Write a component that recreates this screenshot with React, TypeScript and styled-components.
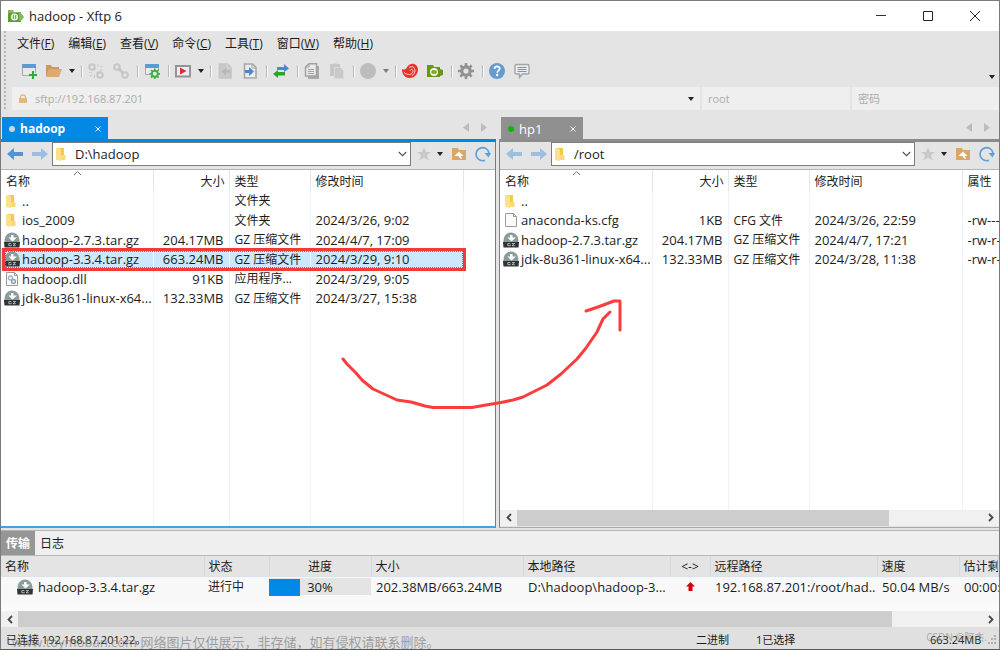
import React from "react";
import styled, { createGlobalStyle, css } from "styled-components";

const GlobalStyle = createGlobalStyle`
  * { box-sizing: border-box; }
  body {
    margin: 0;
    background: #e4e4e4;
    color: #1c1c1c;
    font: 13px/18px "Open Sans", "Noto Sans CJK SC", sans-serif;
  }
  button, input { font: inherit; color: inherit; }
  button { padding: 0; border: 0; background: none; white-space: nowrap; }
  svg { display: block; flex: none; }
`;

/* ---------- frame ---------- */

const Window = styled.div`
  position: relative;
  display: flex;
  flex-direction: column;
  min-height: 100vh;
  overflow: hidden;
  border: 1px solid #7c7a7c;
  border-bottom-color: #5a5a5a;
`;

const TitleBar = styled.header`
  display: flex;
  align-items: center;
  height: 30px;
  padding: 0 3px 0 7px;
  gap: 5px;
  background: #fff;
`;

const Title = styled.h1`
  flex: 1;
  margin: 0;
  font-size: 13px;
  font-weight: 400;
`;

const CaptionButton = styled.button`
  display: grid;
  place-items: center;
  width: 42px;
  height: 30px;
`;

/* ---------- menus and toolbar ---------- */

const Ribbon = styled.div`
  display: flex;
  flex-direction: column;
  padding-left: 11px;
  background: radial-gradient(circle at 1px 1px, #b4b4b4 1px, transparent 1px) 3px 0 / 2px 4px repeat-y, #e4e4e4;
`;

const MenuBar = styled.nav`
  display: flex;
  align-items: center;
  height: 25px;
  padding-left: 5px;
  gap: 14px;
`;

const MenuItem = styled.button`
  font-size: 12px;
`;

const ToolBar = styled.div`
  display: flex;
  align-items: center;
  height: 31px;
  padding: 0 0 2px 4px;
`;

const ToolButton = styled.button<{ $w?: number }>`
  display: grid;
  place-items: center;
  flex: none;
  width: ${(p) => p.$w ?? 25}px;
  height: 24px;
`;

const Separator = styled.span`
  flex: none;
  width: 6px;
  height: 12px;
  border-right: 1px solid #fafafa;
  background: linear-gradient(#b8b8b8, #b8b8b8) 4px 0 / 1px 100% no-repeat;
`;

const Overflow = styled.div`
  flex: 1;
  display: flex;
  justify-content: flex-end;
  padding: 12px 4px 0 0;
`;

const QuickConnect = styled.form`
  display: flex;
  gap: 2px;
  height: 23px;
`;

const Field = styled.div<{ $basis?: number }>`
  display: flex;
  align-items: center;
  flex: ${(p) => (p.$basis ? `0 1 ${p.$basis}px` : "1 1 0")};
  min-width: 0;
  padding: 1px 6px 0;
  background: #efefef;
  color: #ababab;
  font-size: 11px;
`;

const TextInput = styled.input`
  flex: 1;
  min-width: 0;
  padding: 0;
  border: 0;
  outline: 0;
  background: none;
  &::placeholder { color: #ababab; opacity: 1; }
`;

const FieldInput = styled(TextInput)<{ $lead?: boolean }>`
  margin-left: ${(p) => (p.$lead ? 7 : 0)}px;
`;

/* ---------- panes ---------- */

const Panes = styled.main`
  flex: 1;
  display: grid;
  grid-template-columns: 495fr 500fr;
  gap: 3px;
`;

const Pane = styled.section`
  display: flex;
  flex-direction: column;
  min-width: 0;
`;

const TabStrip = styled.div<{ $active: boolean }>`
  display: flex;
  align-items: flex-end;
  height: 32px;
  padding-left: ${(p) => (p.$active ? 1 : 2)}px;
  border-bottom: 3px solid ${(p) => (p.$active ? "#0088dd" : "#8c8c8c")};
`;

const Tab = styled.div<{ $active: boolean }>`
  display: flex;
  align-items: center;
  width: ${(p) => (p.$active ? 106 : 82)}px;
  height: 22px;
  padding: 2px 7px 0;
  gap: 5px;
  background: ${(p) => (p.$active ? "#0289e6" : "#909090")};
  color: #fff;
  font-size: ${(p) => (p.$active ? 12 : 13)}px;
  font-weight: ${(p) => (p.$active ? 700 : 400)};
`;

const TabLabel = styled.button`
  flex: 1;
  text-align: left;
`;

const Dot = styled.i<{ $color: string }>`
  width: 6px;
  height: 6px;
  border-radius: 50%;
  background: ${(p) => p.$color};
`;

const TabScroll = styled.div`
  flex: 1;
  display: flex;
  justify-content: flex-end;
  gap: 12px;
  padding: 0 9px 7px 0;
`;

const PaneBody = styled.div<{ $active: boolean }>`
  flex: 1;
  display: flex;
  flex-direction: column;
  min-width: 0;
  ${(p) =>
    p.$active
      ? css`border-right: 1px solid #3a8fc0; border-bottom: 2px solid #45a3dc;`
      : css`padding-bottom: 1px; border-left: 1px solid #808080; border-bottom: 1px solid #a8a8a8;`}
`;

const PathBar = styled.div`
  display: flex;
  align-items: center;
  height: 28px;
  padding: 0 0 3px 1px;
  border-bottom: 1px solid #b4b4b4;
`;

const PathBox = styled.div`
  display: flex;
  align-items: center;
  flex: 1;
  min-width: 0;
  height: 24px;
  margin-right: 1px;
  padding: 0 3px 0 1px;
  gap: 5px;
  border: 1px solid #7c7c7c;
  background: #fff;
`;

const PathGap = styled.span`
  width: 3px;
`;

const FileArea = styled.div`
  flex: 1;
  display: grid;
  overflow: hidden;
  background: #fff;
`;

const FileTable = styled.table`
  width: 100%;
  height: 100%;
  table-layout: fixed;
  border-collapse: collapse;
`;

const HeadRow = styled.tr`
  height: 21px;
`;

const HeadCell = styled.th<{ $right?: boolean; $last?: boolean }>`
  position: relative;
  padding: ${(p) => (p.$right ? "2px 4px 0 0" : "2px 0 0 5px")};
  border-right: ${(p) => (p.$last ? 0 : 1)}px solid #e2e6ea;
  overflow: hidden;
  font-size: 12px;
  font-weight: 400;
  text-align: ${(p) => (p.$right ? "right" : "left")};
  white-space: nowrap;
`;

const SortMark = styled.span`
  position: absolute;
  top: 0;
  left: 50%;
  margin-left: -4px;
`;

const FileRow = styled.tr<{ $selected?: boolean }>`
  height: 19px;
  &:nth-child(even) { height: 20px; }
  ${(p) => p.$selected && css`td:not(:last-child) { background: #cce8ff; }`}
`;

const FillRow = styled.tr``;

const FileCell = styled.td<{ $right?: boolean; $cjk?: boolean; $last?: boolean }>`
  padding: ${(p) => (p.$right ? "0 5px 0 0" : p.$cjk ? "1px 0 0 5px" : "0 0 0 5px")};
  border-right: ${(p) => (p.$last ? 0 : 1)}px solid #edf3fa;
  overflow: hidden;
  font-size: ${(p) => (p.$cjk ? 12 : 13)}px;
  text-align: ${(p) => (p.$right ? "right" : "left")};
  white-space: nowrap;
`;

const NameCell = styled(FileCell)`
  padding: 0 0 0 3px;
`;

const NameLine = styled.span<{ $gap?: number }>`
  display: flex;
  align-items: center;
  gap: ${(p) => p.$gap ?? 2}px;
`;

const ScrollBar = styled.div`
  display: flex;
  height: 16px;
  background: #f0f0f0;
`;

const ScrollButton = styled.button`
  display: grid;
  place-items: center;
  width: 17px;
  height: 16px;
`;

const ScrollTrack = styled.div`
  flex: 1;
`;

const ScrollThumb = styled.div`
  height: 16px;
  background: #cdcdcd;
`;

/* ---------- transfer panel ---------- */

const Transfers = styled.section`
  margin-top: 2px;
  border-top: 1px solid #b4b4b4;
  background: #f8f8f8;
`;

const PanelTabs = styled.div`
  display: flex;
  height: 25px;
  border-bottom: 1px solid #b8b8b8;
  background: #efefef;
`;

const PanelTab = styled.button<{ $on?: boolean }>`
  padding: 2px 5px 0;
  background: ${(p) => (p.$on ? "#969696" : "transparent")};
  color: ${(p) => (p.$on ? "#fff" : "inherit")};
  font-size: 12px;
  font-weight: ${(p) => (p.$on ? 700 : 400)};
`;

const TransferTable = styled.table`
  width: 100%;
  table-layout: fixed;
  border-collapse: collapse;
`;

const TransferHead = styled.th<{ $center?: boolean }>`
  height: 20px;
  padding: 2px 0 0 ${(p) => (p.$center ? 0 : 4)}px;
  border-right: 1px solid #d0dae4;
  border-bottom: 1px solid #dbe2e9;
  overflow: hidden;
  background: #e4e4e4;
  font-size: 12px;
  font-weight: 400;
  text-align: ${(p) => (p.$center ? "center" : "left")};
  white-space: nowrap;
`;

const TransferCell = styled.td<{ $flush?: boolean; $cjk?: boolean }>`
  height: 21px;
  padding: ${(p) => (p.$cjk ? 1 : 0)}px 0 0 ${(p) => (p.$flush ? 0 : p.$cjk ? 4 : 5)}px;
  overflow: hidden;
  font-size: ${(p) => (p.$cjk ? 12 : 13)}px;
  white-space: nowrap;
`;

const Progress = styled.div`
  display: grid;
  align-items: center;
  height: 17px;
  background: #e4e4e4;
  text-align: center;
  > * { grid-area: 1 / 1; }
`;

const ProgressFill = styled.div`
  height: 17px;
  background: #0289e6;
`;

const Centered = styled.div`
  display: grid;
  justify-items: center;
`;

const TransferGap = styled.div`
  height: 14px;
  background: linear-gradient(#f8f8f8, #fbfbfb);
`;

const StatusBar = styled.footer`
  display: flex;
  align-items: center;
  height: 22px;
  padding: 3px 2px 0 5px;
  background: #e0e0e0;
  font-size: 11px;
`;

const Status = styled.span<{ $w?: number }>`
  ${(p) => (p.$w ? `width: ${p.$w}px;` : "flex: 1;")}
  white-space: nowrap;
`;

const Watermark = styled.div`
  position: absolute;
  left: 11px;
  bottom: -2px;
  color: rgba(110, 110, 110, 0.6);
  white-space: nowrap;
`;

const CornerMark = styled.div`
  position: absolute;
  right: 12px;
  bottom: 3px;
  color: rgba(110, 110, 110, 0.5);
  font-size: 10px;
  white-space: nowrap;
`;

/* ---------- annotations drawn over the window ---------- */

const Highlight = styled.div`
  position: absolute;
  top: 247px;
  left: 1px;
  width: 464px;
  height: 23px;
  border: 3px solid #f23a3a;
  outline: 1px dotted #777;
  outline-offset: -4px;
  pointer-events: none;
`;

const Stroke = styled.svg`
  position: absolute;
  top: 289px;
  left: 334px;
  pointer-events: none;
`;

/* ---------- icons ---------- */

const Svg = ({ children, w = 16, h = 16 }: { children: React.ReactNode; w?: number; h?: number }) => (
  <svg width={w} height={h} viewBox={`0 0 ${w} ${h}`} fill="none" aria-hidden="true">{children}</svg>
);

const AppIcon = () => (
  <Svg>
    <path d="M0 2h5l1 2h7v10H0z" fill="#8ab45a" />
    <path d="M0 5h13v9H0z" fill="#5f9a38" />
    <path d="M11 5h2l3 4-3 4h-2z" fill="#86b956" />
    <circle cx="6.500" cy="9" r="3.600" fill="#e9f3dc" />
    <path d="M5.300 10.800V8q0-.8.800-.800M7.700 7.200v2.800q0 .8-.8.800" stroke="#5f9a38" />
  </Svg>
);
const NewSession = () => (
  <Svg>
    <path d="M1.500 1.500h13v11h-13z" fill="#e9e9e9" stroke="#a9a9a9" />
    <path d="M1 1h14v4H1z" fill="#5b9bd5" />
    <path d="M12 8v8M8 12h8" stroke="#e4e4e4" strokeWidth="4" />
    <path d="M12 8v8M8 12h8" stroke="#27b033" strokeWidth="2" />
  </Svg>
);
const OpenFolder = () => (
  <Svg>
    <path d="M0 2h5l1 2h7v3H3L0 14z" fill="#c79a62" />
    <path d="M3 6h13l-3 8H0z" fill="#dcaa6c" />
  </Svg>
);
const LinkIcon = ({ broken }: { broken?: boolean }) => (
  <Svg>
    <circle cx="4" cy="4" r="2.800" stroke="#c6c6c6" strokeWidth="2" />
    <circle cx="12" cy="12" r="2.800" stroke="#c6c6c6" strokeWidth="2" />
    {broken ? (
      <>
        <path d="M5.500 5.500l1.500 1.500M9 9l1.500 1.500" stroke="#c6c6c6" strokeWidth="2" />
        <path d="M10 1v3M12 4.500l2.500-1.500M11 7h4M1 9.500h3M2 13.500l2-2M6.500 11.500V15" stroke="#cecece" strokeWidth="1.200" />
      </>
    ) : (
      <path d="M6 6l4 4" stroke="#c6c6c6" strokeWidth="2.600" />
    )}
  </Svg>
);
const gearTeeth = "M8 0v16M0 8h16M2.300 2.300l11.400 11.400M13.700 2.300L2.300 13.700";
const SessionGear = () => (
  <Svg>
    <path d="M1.500 1.500h13v10h-13z" fill="#e9e9e9" stroke="#a9a9a9" />
    <path d="M1 1h14v4H1z" fill="#5b9bd5" />
    <g transform="translate(5.500 5.500) scale(.66)">
      <circle cx="8" cy="8" r="7.500" fill="#e4e4e4" />
      <path d={gearTeeth} stroke="#3fae49" strokeWidth="2.600" />
      <circle cx="8" cy="8" r="4.500" fill="#e9e9e9" stroke="#3fae49" strokeWidth="2.800" />
    </g>
  </Svg>
);
const PlayBox = () => (
  <Svg>
    <path d="M1 3h14v10.500H1z" fill="#e8eef2" stroke="#949494" strokeWidth="2" />
    <path d="M5 4.500v7l6.500-3.500z" fill="#e02a35" />
  </Svg>
);
const DocArrow = ({ on }: { on?: boolean }) => (
  <Svg>
    <path d="M2.500 1h8l3.500 3.500V15H2.500z" fill={on ? "#ececec" : "#c9c9c9"} stroke={on ? "#a6a6a6" : "#c4c4c4"} strokeWidth="1.600" />
    <path d="M10 1v4h4" stroke={on ? "#a6a6a6" : "#d8d8d8"} />
    {on ? <path d="M3 7h4V4l5 4.500-5 4.500v-3H3z" fill="#4788d0" /> : <path d="M13 7.500H9v-3L4.500 8.500 9 12.500v-3h4z" fill="#b5b5b5" />}
  </Svg>
);
const Swap = () => (
  <Svg>
    <path d="M4 4h7V1l5 4.500L11 9V7H4z" fill="#4d87cf" />
    <path d="M12 9H5V7l-5 4 5 4v-2.500h7z" fill="#27a52d" />
  </Svg>
);
const CopyIcon = () => (
  <Svg>
    <path d="M4 3h11v13H4z" fill="#a9a9a9" />
    <path d="M1.500 4L5 .8h7.500V13h-11z" fill="#e9e9e9" stroke="#a0a0a0" strokeWidth="1.400" />
    <path d="M4 6.500h6M4 8.500h6M4 10.500h6M5 1v3H2" stroke="#a0a0a0" />
  </Svg>
);
const PasteIcon = () => (
  <Svg>
    <path d="M1 1h10v12H1z" fill="#c7c7c7" />
    <path d="M5.500 4.500h6l3 3v8h-9z" fill="#c9c9c9" stroke="#dadada" />
    <path d="M4 .5h4" stroke="#d8d8d8" />
  </Svg>
);
const Disc = () => <Svg><circle cx="8" cy="8" r="8" fill="#bdbdbd" /></Svg>;
const XshellIcon = () => (
  <Svg>
    <path d="M0 6c2 1 3.500.5 4.500-1C6 2 9 0 12 1c4 1 5 6 3 9.500C12.500 15.500 6 16.500 2.500 13 .5 11 0 9 0 6z" fill="#e8342f" />
    <path d="M2 9.500c3.500 3 8.500 2.500 9-1 .2-2.200-2.300-2.800-2.800-1M7 4.500c3-2 6 0 6 3 0 2.500-1.500 4-3 5" stroke="#f7d4d0" strokeWidth="1" />
  </Svg>
);
const XftpIcon = () => (
  <Svg>
    <path d="M0 2h6l1 2h6v2l3 1v5l-3 1v1H0z" fill="#69980c" />
    <circle cx="7" cy="9" r="4" fill="#f1f6e8" />
    <path d="M5 10.500V8.500q0-1 1.200-1V11M9 7.500v2q0 1-1.200 1V7" stroke="#69980c" strokeWidth="1.100" />
  </Svg>
);
const Gear = () => (
  <Svg>
    <path d={gearTeeth} stroke="#919191" strokeWidth="2.600" />
    <circle cx="8" cy="8" r="4.200" fill="#e4e4e4" stroke="#919191" strokeWidth="3.200" />
  </Svg>
);
const Help = () => (
  <Svg>
    <circle cx="8" cy="8" r="8" fill="#659bd3" />
    <path d="M5.500 6c0-3.400 5.200-3.200 5.200-.400 0 2-2.500 2-2.500 4.200" stroke="#fff" strokeWidth="1.800" />
    <circle cx="8.200" cy="12" r="1.200" fill="#fff" />
  </Svg>
);
const Comment = () => (
  <Svg>
    <path d="M2.500 1.500h11q1.500 0 1.500 1.500v6.500q0 1.500-1.500 1.500H8.500L5.500 14.500V11h-3Q1 11 1 9.500V3q0-1.500 1.500-1.500z" fill="#e9edf0" stroke="#a5a5a5" strokeWidth="1.400" />
    <path d="M3.500 4.500h9M3.500 6.500h9M3.500 8.500h9" stroke="#5e9ad4" />
  </Svg>
);
const Caret = ({ color = "#222" }: { color?: string }) => (
  <Svg w={6} h={4}><path d="M0 0h6L3 4z" fill={color} /></Svg>
);
const Lock = () => (
  <Svg w={10} h={10}>
    <path d="M2.500 5V3q0-2 2.500-2t2.500 2v2" stroke="#e5b878" strokeWidth="1.300" />
    <path d="M1 4h8v5H1z" fill="#e5b878" />
  </Svg>
);
const NavArrow = ({ back, strong }: { back?: boolean; strong?: boolean }) => (
  <Svg>
    <path d={back ? "M0 8l7-6v4h9v4H7v4z" : "M16 8L9 2v4H0v4h9v4z"} fill={strong ? "#4f95d4" : "#9dbfde"} />
  </Svg>
);
const Folder = () => (
  <Svg>
    <path d="M4 2h6v12H4z" fill="#f2c94f" />
    <path d="M2 2l5 1v12l-5-1z" fill="#fde08a" />
    <path d="M7 9h4.500v5H7z" fill="#fad976" />
  </Svg>
);
const Archive = () => (
  <Svg>
    <path d="M.5 9.500C.5 4 3.500 .5 8 .5s7.500 3.500 7.500 9V11H.5z" fill="#8b9b9a" />
    <path d="M7 3h2.500v2.500H13L8.500 9.500 4.500 5.500H7z" fill="#fff" />
    <path d="M0 10h16l-.5 5.500H.5z" fill="#2f3335" />
    <path d="M7.300 11.500H4.800v2.200h2.500v-1M9 11.500h2.600L9 13.700h2.800" stroke="#d8dcdc" strokeWidth=".7" />
  </Svg>
);
const Sheet = ({ gears }: { gears?: boolean }) => (
  <Svg>
    <path d="M2.500 1.500h8l3 3v10h-11z" fill="#fafafa" stroke="#9a9a9a" />
    <path d="M10.500 1.500v3h3" stroke="#9a9a9a" />
    {gears && (
      <>
        <circle cx="6.500" cy="7" r="2" stroke="#9fb3c0" strokeWidth="1.400" />
        <circle cx="9.500" cy="10.500" r="2" fill="#dbe7ee" stroke="#8ba3b2" strokeWidth="1.400" />
      </>
    )}
  </Svg>
);
const Star = () => (
  <Svg w={14} h={14}><path d="M7 0l2 5h5l-4 3.300 1.500 5.200L7 10.500l-4.500 3L4 8.300 0 5h5z" fill="#c9c9c9" /></Svg>
);
const UpFolder = () => (
  <Svg>
    <path d="M1 2h6l1 2h7v10H1z" fill="#dba766" />
    <path d="M8 5.500l4.500 4.500H10c0 1 .5 2 1.500 3-2-.2-3.500-1-4-3H3.500z" fill="#fff" />
  </Svg>
);
const Refresh = () => (
  <Svg>
    <path d="M10 14.200A6.500 6.500 0 1 1 14 7" stroke="#5c9fda" strokeWidth="1.600" />
    <path d="M9.500 7H16l-2.500 4.500z" fill="#5c9fda" />
  </Svg>
);
const Chevron = () => <Svg w={9} h={6}><path d="M.8 1l3.700 3.700L8.200 1" stroke="#555" strokeWidth="1.200" /></Svg>;
const SortUp = () => <Svg w={9} h={6}><path d="M1 5l3.500-3.500L8 5" stroke="#777" /></Svg>;
const Cross = () => <Svg w={6} h={6}><path d="M.5.500l5 5M5.500.500l-5 5" stroke="#f2f2f2" /></Svg>;
const SideTri = ({ left }: { left?: boolean }) => (
  <Svg w={6} h={9}><path d={left ? "M6 0v9L0 4.500z" : "M0 0v9l6-4.500z"} fill="#bcbcbc" /></Svg>
);
const ScrollArrow = ({ left }: { left?: boolean }) => (
  <Svg w={6} h={9}><path d={left ? "M5 1L1.500 4.500 5 8" : "M1 1l3.500 3.500L1 8"} stroke="#484848" strokeWidth="1.800" /></Svg>
);
const UpArrow = () => <Svg w={9} h={9}><path d="M4.500 0L9 4.500H6.500V9h-4V4.500H0z" fill="#d0000c" /></Svg>;
const Grip = () => (
  <Svg w={10} h={10}><path d="M7 1h2M4 4h2M7 4h2M1 8h2M4 8h2M7 8h2" stroke="#b0b0b0" strokeWidth="2" /></Svg>
);

/* ---------- data ---------- */

type Kind = "folder" | "gz" | "dll" | "file";
type Entry = { kind: Kind; name: string; size?: string; type?: string; time?: string; attr?: string; selected?: boolean };

const localFiles: Entry[] = [
  { kind: "folder", name: "..", type: "文件夹" },
  { kind: "folder", name: "ios_2009", type: "文件夹", time: "2024/3/26, 9:02" },
  { kind: "gz", name: "hadoop-2.7.3.tar.gz", size: "204.17MB", type: "GZ 压缩文件", time: "2024/4/7, 17:09" },
  { kind: "gz", name: "hadoop-3.3.4.tar.gz", size: "663.24MB", type: "GZ 压缩文件", time: "2024/3/29, 9:10", selected: true },
  { kind: "dll", name: "hadoop.dll", size: "91KB", type: "应用程序...", time: "2024/3/29, 9:05" },
  { kind: "gz", name: "jdk-8u361-linux-x64...", size: "132.33MB", type: "GZ 压缩文件", time: "2024/3/27, 15:38" },
];

const remoteFiles: Entry[] = [
  { kind: "folder", name: ".." },
  { kind: "file", name: "anaconda-ks.cfg", size: "1KB", type: "CFG 文件", time: "2024/3/26, 22:59", attr: "-rw-------" },
  { kind: "gz", name: "hadoop-2.7.3.tar.gz", size: "204.17MB", type: "GZ 压缩文件", time: "2024/4/7, 17:21", attr: "-rw-r--r--" },
  { kind: "gz", name: "jdk-8u361-linux-x64...", size: "132.33MB", type: "GZ 压缩文件", time: "2024/3/28, 11:38", attr: "-rw-r--r--" },
];

const menus = [["文件", "F"], ["编辑", "E"], ["查看", "V"], ["命令", "C"], ["工具", "T"], ["窗口", "W"], ["帮助", "H"]];

const fileIcons: Record<Kind, React.ReactNode> = {
  folder: <Folder />,
  gz: <Archive />,
  dll: <Sheet gears />,
  file: <Sheet />,
};

/* ---------- parts ---------- */

const Tool = ({ label, children, w }: { label: string; children: React.ReactNode; w?: number }) => (
  <ToolButton type="button" aria-label={label} $w={w}>{children}</ToolButton>
);

function HScroll({ share }: { share: number }) {
  return (
    <ScrollBar>
      <ScrollButton aria-label="向左滚动"><ScrollArrow left /></ScrollButton>
      <ScrollTrack><ScrollThumb style={{ width: `${share}%` }} /></ScrollTrack>
      <ScrollButton aria-label="向右滚动"><ScrollArrow /></ScrollButton>
    </ScrollBar>
  );
}

function FilePane({ active, tab, path, files, remote }: { active: boolean; tab: string; path: string; files: Entry[]; remote?: boolean }) {
  return (
    <Pane>
      <TabStrip $active={active}>
        <Tab $active={active}>
          <Dot $color={remote ? "#0cb60c" : "#cfd6db"} />
          <TabLabel>{tab}</TabLabel>
          <button aria-label="关闭"><Cross /></button>
        </Tab>
        <TabScroll>
          <button aria-label="上一个"><SideTri left /></button>
          <button aria-label="下一个"><SideTri /></button>
        </TabScroll>
      </TabStrip>
      <PaneBody $active={active}>
        <PathBar>
          <Tool label="后退"><NavArrow back strong={active} /></Tool>
          <Tool label="前进"><NavArrow /></Tool>
          <PathBox>
            <Folder />
            <TextInput aria-label="路径" defaultValue={path} />
            <button aria-label="展开"><Chevron /></button>
          </PathBox>
          <Tool label="收藏" w={24}><Star /></Tool>
          <Tool label="收藏列表" w={8}><Caret /></Tool>
          <PathGap />
          <Tool label="上级目录" w={24}><UpFolder /></Tool>
          <Tool label="刷新" w={24}><Refresh /></Tool>
        </PathBar>
        <FileArea>
          <FileTable>
            <colgroup>
              <col style={{ width: 152 }} />
              <col style={{ width: 76 }} />
              <col style={{ width: 81 }} />
              <col style={{ width: 153 }} />
              <col />
            </colgroup>
            <thead>
              <HeadRow>
                <HeadCell>名称<SortMark><SortUp /></SortMark></HeadCell>
                <HeadCell $right>大小</HeadCell>
                <HeadCell>类型</HeadCell>
                <HeadCell>修改时间</HeadCell>
                <HeadCell $last>{remote ? "属性" : ""}</HeadCell>
              </HeadRow>
            </thead>
            <tbody>
              {files.map((f) => (
                <FileRow key={f.name} $selected={f.selected}>
                  <NameCell><NameLine>{fileIcons[f.kind]}{f.name}</NameLine></NameCell>
                  <FileCell $right>{f.size}</FileCell>
                  <FileCell $cjk>{f.type}</FileCell>
                  <FileCell>{f.time}</FileCell>
                  <FileCell $last>{f.attr}</FileCell>
                </FileRow>
              ))}
              <FillRow>
                <FileCell /><FileCell /><FileCell /><FileCell /><FileCell $last />
              </FillRow>
            </tbody>
          </FileTable>
        </FileArea>
        {remote && <HScroll share={80} />}
      </PaneBody>
    </Pane>
  );
}

function TransferPanel() {
  const percent = 30;
  return (
    <Transfers>
      <PanelTabs>
        <PanelTab $on>传输</PanelTab>
        <PanelTab>日志</PanelTab>
      </PanelTabs>
      <TransferTable>
        <colgroup>
          {[203, 65, 102, 152, 147, 40, 167, 82].map((w, i) => <col key={i} style={{ width: w }} />)}
          <col />
        </colgroup>
        <thead>
          <tr>
            <TransferHead>名称</TransferHead>
            <TransferHead>状态</TransferHead>
            <TransferHead $center>进度</TransferHead>
            <TransferHead>大小</TransferHead>
            <TransferHead>本地路径</TransferHead>
            <TransferHead $center>&lt;-&gt;</TransferHead>
            <TransferHead>远程路径</TransferHead>
            <TransferHead>速度</TransferHead>
            <TransferHead>估计剩余</TransferHead>
          </tr>
        </thead>
        <tbody>
          <tr>
            <TransferCell $flush><TransferName>
              <Archive />hadoop-3.3.4.tar.gz
            </TransferName></TransferCell>
            <TransferCell $cjk>进行中</TransferCell>
            <TransferCell $flush>
              <Progress role="progressbar" aria-valuenow={percent} aria-valuemin={0} aria-valuemax={100} aria-label="进度">
                <ProgressFill style={{ width: `${percent}%` }} />
                <span>{percent}%</span>
              </Progress>
            </TransferCell>
            <TransferCell>202.38MB/663.24MB</TransferCell>
            <TransferCell>D:\hadoop\hadoop-3...</TransferCell>
            <TransferCell $flush><Centered><UpArrow /></Centered></TransferCell>
            <TransferCell>192.168.87.201:/root/had..</TransferCell>
            <TransferCell>50.04 MB/s</TransferCell>
            <TransferCell>00:00:09</TransferCell>
          </tr>
        </tbody>
      </TransferTable>
      <TransferGap />
      <HScroll share={90.7} />
    </Transfers>
  );
}

const TransferName = styled(NameLine)`
  padding-left: 16px;
  gap: 5px;
`;

export default function App() {
  return (
    <Window>
      <GlobalStyle />
      <TitleBar>
        <AppIcon />
        <Title>hadoop - Xftp 6</Title>
        <CaptionButton aria-label="最小化"><Svg w={10} h={10}><path d="M0 4.500h10" stroke="#333" /></Svg></CaptionButton>
        <CaptionButton aria-label="最大化"><Svg w={10} h={10}><path d="M.5.500h9v9h-9z" stroke="#222" /></Svg></CaptionButton>
        <CaptionButton aria-label="关闭"><Svg w={10} h={10}><path d="M0 0l10 10M10 0L0 10" stroke="#222" /></Svg></CaptionButton>
      </TitleBar>

      <Ribbon>
        <MenuBar>
          {menus.map(([name, key]) => (
            <MenuItem key={key}>{name}(<u>{key}</u>)</MenuItem>
          ))}
        </MenuBar>
        <ToolBar>
          <Tool label="新建"><NewSession /></Tool>
          <Tool label="打开"><OpenFolder /></Tool>
          <Tool label="打开列表" w={11}><Caret /></Tool>
          <Separator />
          <Tool label="断开"><LinkIcon broken /></Tool>
          <Tool label="重新连接"><LinkIcon /></Tool>
          <Separator />
          <Tool label="属性"><SessionGear /></Tool>
          <Separator />
          <Tool label="开始"><PlayBox /></Tool>
          <Tool label="开始列表" w={11}><Caret /></Tool>
          <Separator />
          <Tool label="接收"><DocArrow /></Tool>
          <Tool label="发送"><DocArrow on /></Tool>
          <Separator />
          <Tool label="同步"><Swap /></Tool>
          <Separator />
          <Tool label="复制"><CopyIcon /></Tool>
          <Tool label="粘贴"><PasteIcon /></Tool>
          <Separator />
          <Tool label="停止"><Disc /></Tool>
          <Tool label="停止列表" w={11}><Caret color="#7b7b7b" /></Tool>
          <Separator />
          <Tool label="Xshell"><XshellIcon /></Tool>
          <Tool label="Xftp"><XftpIcon /></Tool>
          <Separator />
          <Tool label="选项"><Gear /></Tool>
          <Separator />
          <Tool label="帮助"><Help /></Tool>
          <Tool label="反馈"><Comment /></Tool>
          <Overflow><button aria-label="更多"><Caret /></button></Overflow>
        </ToolBar>
        <QuickConnect>
          <Field>
            <Lock />
            <FieldInput $lead aria-label="主机" defaultValue="sftp://192.168.87.201" />
            <button type="button" aria-label="主机列表"><Caret /></button>
          </Field>
          <Field $basis={148}><FieldInput aria-label="用户名" defaultValue="root" /></Field>
          <Field $basis={147}><FieldInput aria-label="密码" type="password" placeholder="密码" /></Field>
        </QuickConnect>
      </Ribbon>

      <Panes>
        <FilePane active tab="hadoop" path="D:\hadoop" files={localFiles} />
        <FilePane active={false} remote tab="hp1" path="/root" files={remoteFiles} />
      </Panes>

      <TransferPanel />

      <StatusBar>
        <Status>已连接 192.168.87.201:22。</Status>
        <Status $w={60}>二进制</Status>
        <Status $w={174}>1已选择</Status>
        <Status $w={57}>663.24MB</Status>
        <Grip />
      </StatusBar>
      <Watermark>www.toymoban.com 网络图片仅供展示，非存储，如有侵权请联系删除。</Watermark>
      <CornerMark>CSDN @阿杰.</CornerMark>

      <Highlight />
      <Stroke width="300" height="130" viewBox="335 290 300 130" fill="none" stroke="#f93c3c" strokeWidth="3" strokeLinecap="round" strokeLinejoin="round" aria-hidden="true">
        <path d="M343 359L347 364L356 373L362 380L373 389L397 400L411 402L425 406L433 407.500L472 407.500L486 405L501 402.500L513 400L523 397L535 391L547 385L561 374L577 359L586 348L597 332L603 319L610 312" />
        <path d="M586 311L598 307L614 301L620 301V330" />
      </Stroke>
    </Window>
  );
}
